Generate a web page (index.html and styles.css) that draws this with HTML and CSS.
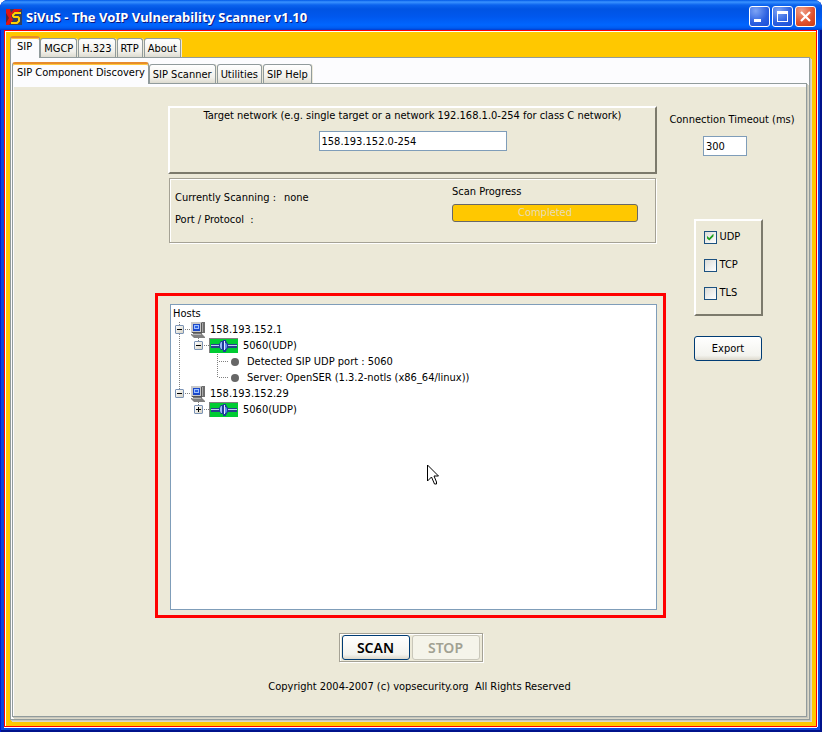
FILE: index.html
```
<!DOCTYPE html>
<html lang="en">
<head>
    <meta charset="UTF-8">
    <meta name="viewport" content="width=device-width, initial-scale=1.0">
    <title>SiVuS - The VoIP Vulnerability Scanner v1.10</title>
    <link rel="stylesheet" href="styles.css">
</head>
<body>
    <svg class="defs" aria-hidden="true">
        <symbol id="computer" viewBox="0 0 16 16">
            <path d="M10 0h5v11h-4z" fill="#6e6e6e"/>
            <path d="M12 1h1v9h-1z" fill="#a8a8a8"/>
            <path d="M1 0h10l1 1v10H1z" fill="#c9c9c9"/>
            <path d="M11 1h1v10H2v-1h9z" fill="#555"/>
            <path d="M3 2h7v7H3z" fill="#1c48c8"/>
            <path d="M4 3h5v4H4z" fill="#9cc0ff"/>
            <path d="M5 4h3v2H5z" fill="#2c62e8"/>
            <path d="M3 11h9v1H3z" fill="#777"/>
            <path d="M1 12h11l3 3v1H4l-3-3z" fill="#808080"/>
            <path d="M2 12h9v1H2z" fill="#b4b4b4"/>
        </symbol>
        <symbol id="plug" viewBox="0 0 29 15">
            <path d="M0 0h29v15H0z" fill="#00cc33"/>
            <path d="M0 0h29v1H1v14H0z" fill="#808080"/>
            <path d="M2 6h9v4H2zM19 6h9v4h-9z" fill="#27408c"/>
            <path d="M2 7h9v1H2zM19 7h9v1h-9z" fill="#c0d0f4"/>
            <path d="M10 6l2-3h2V2h3v1l2 3v4l-2 3v1h-3v-2h-2l-2-3z" fill="#1f3c9c"/>
            <path d="M11 6l1-2h1v7h-1l-1-2z" fill="#9ab8f6"/>
            <path d="M15 3h1v9h-1z" fill="#e4ecff"/>
            <path d="M17 5l1 2v2l-1 2h-1V5z" fill="#5f8cec"/>
        </symbol>
    </svg>

    <div class="window">
        <header class="titlebar">
            <svg class="logo" viewBox="0 0 16 16" aria-hidden="true">
                <path d="M0 0h16v16H0z" fill="#34405c"/>
                <path d="M0 0h4l1 4 3-4h8l-4 3H8L5 7l2 4-4 5H0z" fill="#e01414"/>
                <path d="M0 4l3 5-3 5z" fill="#5a2434"/>
                <path d="M15 4H9L7 6v1l1 1h4l1 1v3l-2 2H5" fill="none" stroke="#ffd200" stroke-width="2"/>
            </svg>
            <h1>SiVuS - The VoIP Vulnerability Scanner v1.10</h1>
            <button class="win-button" aria-label="Minimize">
                <svg viewBox="0 0 19 19"><path d="M4 12h7v3H4z" fill="#fff"/></svg>
            </button>
            <button class="win-button" aria-label="Maximize">
                <svg viewBox="0 0 19 19"><path d="M4 4h11v11H4zM5 7v7h9V7z" fill="#fff" fill-rule="evenodd"/></svg>
            </button>
            <button class="win-button close" aria-label="Close">
                <svg viewBox="0 0 19 19"><path d="M5 5l9 9M14 5l-9 9" stroke="#fff" stroke-width="2.200"/></svg>
            </button>
        </header>

        <div class="client">
            <nav class="tabs">
                <button class="tab active">SIP</button>
                <button class="tab">MGCP</button>
                <button class="tab">H.323</button>
                <button class="tab">RTP</button>
                <button class="tab">About</button>
            </nav>
            <div class="pane outer">
                <nav class="tabs sub">
                    <button class="tab active">SIP Component Discovery</button>
                    <button class="tab">SIP Scanner</button>
                    <button class="tab">Utilities</button>
                    <button class="tab">SIP Help</button>
                </nav>
                <div class="pane inner">
                    <main class="main">
                        <section class="raised target">
                            <label for="target">Target network (e.g. single target or a network 192.168.1.0-254 for class C network)</label>
                            <input class="field" id="target" type="text" value="158.193.152.0-254">
                        </section>

                        <section class="etched status">
                            <dl class="scan-info">
                                <dt>Currently Scanning :</dt>
                                <dd>none</dd>
                                <dt>Port / Protocol &nbsp;:</dt>
                                <dd></dd>
                            </dl>
                            <div class="progress">
                                <span>Scan Progress</span>
                                <div class="progress-bar">Completed</div>
                            </div>
                        </section>

                        <section class="highlight">
                            <div class="hosts">
                                <div class="tree-root">Hosts</div>
                                <ul class="tree">
                                    <li>
                                        <div class="row">
                                            <button class="toggle" aria-label="Collapse"></button><i class="branch"></i>
                                            <svg class="computer"><use href="#computer"/></svg>158.193.152.1
                                        </div>
                                        <ul>
                                            <li>
                                                <div class="row">
                                                    <button class="toggle" aria-label="Collapse"></button><i class="branch"></i>
                                                    <svg class="plug"><use href="#plug"/></svg>5060(UDP)
                                                </div>
                                                <ul>
                                                    <li><div class="row leaf"><i class="branch"></i><i class="dot"></i>Detected SIP UDP port : 5060</div></li>
                                                    <li><div class="row leaf"><i class="branch"></i><i class="dot"></i>Server: OpenSER (1.3.2-notls (x86_64/linux))</div></li>
                                                </ul>
                                            </li>
                                        </ul>
                                    </li>
                                    <li>
                                        <div class="row">
                                            <button class="toggle" aria-label="Collapse"></button><i class="branch"></i>
                                            <svg class="computer"><use href="#computer"/></svg>158.193.152.29
                                        </div>
                                        <ul>
                                            <li>
                                                <div class="row">
                                                    <button class="toggle plus" aria-label="Expand"></button><i class="branch"></i>
                                                    <svg class="plug"><use href="#plug"/></svg>5060(UDP)
                                                </div>
                                            </li>
                                        </ul>
                                    </li>
                                </ul>
                                <svg class="cursor" viewBox="0 0 12 21" aria-hidden="true">
                                    <path d="M.5 1v16l4-4 3 7h2v-2l-2.500-6h4.500z" fill="#fff" stroke="#000"/>
                                </svg>
                            </div>
                        </section>

                        <div class="etched actions">
                            <button class="button">SCAN</button>
                            <button class="button" disabled>STOP</button>
                        </div>
                    </main>

                    <aside class="side">
                        <label for="timeout">Connection Timeout (ms)</label>
                        <input class="field timeout" id="timeout" type="text" value="300">
                        <div class="raised protocols">
                            <label><input type="checkbox" checked>UDP</label>
                            <label><input type="checkbox">TCP</label>
                            <label><input type="checkbox">TLS</label>
                        </div>
                        <button class="button export">Export</button>
                    </aside>

                    <footer class="footer">Copyright 2004-2007 (c) vopsecurity.org&nbsp; All Rights Reserved</footer>
                </div>
            </div>
        </div>
    </div>
</body>
</html>
```
FILE: styles.css
```
* {
    box-sizing: border-box;
}
body {
    margin: 0;
    background: #fff;
    font-family: "DejaVu Sans Condensed", "DejaVu Sans", sans-serif;
    font-stretch: condensed;
    font-size: 11px;
    line-height: 16px;
    color: #000;
}
button, input {
    font: inherit;
    color: inherit;
    margin: 0;
    padding: 0;
}
ul, dl, dd {
    margin: 0;
    padding: 0;
    list-style: none;
}
.defs {
    display: none;
}

/* window frame */
.window {
    display: flex;
    flex-direction: column;
    min-height: 100vh;
    padding: 0 4px 4px;
    border-radius: 8px 8px 0 0;
    background: #0846e0;
    box-shadow: inset 1px 0 #0019cf, inset -2px -2px #00138c;
}
.titlebar {
    display: flex;
    align-items: center;
    gap: 2px;
    height: 30px;
    margin: 0 -4px;
    padding: 3px 6px 0 6px;
    border-radius: 8px 8px 0 0;
    background: linear-gradient(#0058e6 0, #3a93ff 2px, #0b63ee 5px, #0054e3 9px, #0058ee 17px, #0066ff 25px, #005bf0 28px, #003dd0 30px);
}
.logo {
    width: 16px;
    height: 16px;
}
.titlebar h1 {
    flex: 1;
    margin: 0 0 0 2px;
    font: bold 13px/18px "Noto Sans", sans-serif;
    color: #fff;
    text-shadow: 1px 1px #0a1883;
    white-space: nowrap;
}
.win-button {
    width: 21px;
    height: 21px;
    border: 1px solid #fff;
    border-radius: 3px;
    background: radial-gradient(circle at 30% 20%, #7ea4f5, #2a5fe0 60%, #1a4fd8);
}
.win-button svg {
    display: block;
    width: 19px;
    height: 19px;
}
.close {
    background: radial-gradient(circle at 30% 20%, #f0a088, #e0502c 60%, #c83c14);
}
.client {
    flex: 1;
    display: flex;
    flex-direction: column;
    margin: 0 1px 1px 0;
    padding: 5px 4px 4px;
    border: 1px solid #f00;
    background: #ffc800;
    box-shadow: inset 1px 1px #fff, 0 1px #fff, 1px 0 #fff;
}

/* tabs */
.tabs {
    display: flex;
    align-items: flex-end;
    height: 21px;
    margin-left: 1px;
}
.tab {
    height: 19px;
    margin-right: 1px;
    padding: 1px 3px 0;
    border: 1px solid #919b9c;
    border-bottom: 0;
    border-radius: 3px 3px 0 0;
    background: linear-gradient(#fff, #f1f0ea 70%, #dddbd0);
    box-shadow: 1px 0 #ece9d8;
    white-space: nowrap;
}
.tab.active {
    position: relative;
    height: 22px;
    margin: 0 0 -1px;
    padding: 0 7px 2px 6px;
    border-top: 2px solid #e68b2c;
    background: #fcfcfe;
    box-shadow: inset 0 1px #ffc73c;
}
.pane {
    flex: 1;
    display: flex;
    flex-direction: column;
    border: 1px solid #919b9c;
    background: #fcfcfe;
    box-shadow: 1px 1px #c8c7bd, 2px 2px #dcd9c8;
}
.outer {
    margin: 0 2px 2px 1px;
    padding: 4px 2px 2px 1px;
}
.sub {
    margin-left: 0;
}
.sub .tab.active {
    padding: 0 3px 2px 4px;
}
.inner {
    display: grid;
    grid-template-columns: minmax(0, 1fr) 120px;
    grid-template-rows: 1fr auto;
    column-gap: 6px;
    padding: 20px 14px 21px 142px;
    background: #ece9d8;
    box-shadow: inset 1px 3px #fcfcfe, 1px 1px #c8c7bd, 2px 2px #dcd9c8;
}

/* panels */
.raised {
    border: 2px solid;
    border-color: #fff #7c7a6c #7c7a6c #fff;
}
.etched {
    border: 1px solid #a5a295;
    box-shadow: inset 1px 1px #fff, 1px 1px #fff;
}
.main {
    display: flex;
    flex-direction: column;
    padding-top: 2px;
}
.target {
    display: flex;
    flex-direction: column;
    align-items: center;
    gap: 7px;
    height: 68px;
    margin: 0 9px 0 13px;
}
.field {
    height: 20px;
    padding: 0 2px;
    border: 1px solid #7f9db9;
    background: #fff;
}
.target .field {
    width: 188px;
}
.status {
    display: flex;
    justify-content: space-between;
    height: 65px;
    margin: 4px 10px 0 14px;
    padding: 5px 17px 0 5px;
}
.scan-info {
    display: grid;
    grid-template-columns: 109px auto;
    grid-auto-rows: 22px;
    padding-top: 6px;
}
.progress {
    width: 186px;
}
.progress-bar {
    height: 18px;
    margin-top: 4px;
    border: 1px solid #686868;
    border-radius: 3px;
    background: #ffc800;
    color: #e6dcb8;
    line-height: 15px;
    text-align: center;
}

/* hosts tree */
.highlight {
    flex: 1;
    display: flex;
    margin-top: 50px;
    padding: 8px 6px 5px 12px;
    border: 3px solid #f00;
}
.hosts {
    position: relative;
    flex: 1;
    padding: 1px 2px 0;
    border: 1px solid #7f9db9;
    background: #fff;
}
.tree {
    margin-left: 2px;
}
.tree ul {
    margin-left: 19px;
}
.tree li {
    background: repeating-linear-gradient(#808080 0 1px, transparent 1px 2px) 4px 0 / 1px 100% no-repeat;
}
.tree li:last-child {
    background-size: 1px 8px;
}
.row {
    display: flex;
    align-items: center;
    height: 16px;
    white-space: nowrap;
}
.toggle {
    width: 9px;
    height: 9px;
    margin-bottom: 1px;
    border: 1px solid #7b93b5;
    border-radius: 1px;
    background:
        linear-gradient(#000, #000) center / 5px 1px no-repeat,
        linear-gradient(135deg, #fff, #d6d2c4);
}
.toggle.plus {
    background:
        linear-gradient(#000, #000) center / 5px 1px no-repeat,
        linear-gradient(#000, #000) center / 1px 5px no-repeat,
        linear-gradient(135deg, #fff, #d6d2c4);
}
.branch {
    width: 6px;
    height: 1px;
    margin-bottom: 1px;
    background: repeating-linear-gradient(90deg, transparent 0 1px, #808080 1px 2px);
}
.leaf .branch {
    width: 11px;
    margin-left: 5px;
}
.computer {
    width: 16px;
    height: 16px;
    margin-right: 4px;
}
.plug {
    width: 29px;
    height: 15px;
    margin: 0 5px 1px 0;
}
.dot {
    width: 8px;
    height: 8px;
    margin: 0 8px 0 2px;
    border-radius: 50%;
    background: #666;
}
.cursor {
    position: absolute;
    left: 256px;
    top: 159px;
    width: 12px;
    height: 21px;
}

/* buttons */
.button {
    height: 25px;
    border: 1px solid #003c74;
    border-radius: 3px;
    background: linear-gradient(#fff, #f3f3ee 80%, #dcd8cc);
}
.button:disabled {
    border-color: #c9c7ba;
    background: #f5f4ea;
    color: #a1a192;
}
.actions {
    display: flex;
    gap: 2px;
    align-self: center;
    margin-top: 15px;
    padding: 1px 2px;
}
.actions .button {
    width: 68px;
    font: 600 14px "Noto Sans", sans-serif;
}

/* right column */
.side {
    display: flex;
    flex-direction: column;
    align-items: center;
    padding-top: 8px;
    white-space: nowrap;
}
.timeout {
    width: 44px;
    margin: 8px 14px 63px 0;
}
.protocols {
    display: flex;
    flex-direction: column;
    gap: 12px;
    width: 69px;
    height: 97px;
    margin-right: 8px;
    padding: 8px;
}
.protocols label {
    display: flex;
    align-items: center;
    gap: 3px;
}
.protocols input {
    appearance: none;
    width: 13px;
    height: 13px;
    border: 1px solid #1c5180;
    background: linear-gradient(135deg, #dcdcd7, #fff);
}
.protocols input:checked::before {
    content: "";
    display: block;
    width: 7px;
    height: 7px;
    margin: 2px;
    background: #21a121;
    clip-path: polygon(0 30%, 40% 65%, 100% 0, 100% 40%, 40% 100%, 0 65%);
}
.export {
    width: 68px;
    margin: 20px 8px 0 0;
}
.footer {
    grid-column: 1 / -1;
    margin: 17px 0 0 -108px;
    text-align: center;
}
```
